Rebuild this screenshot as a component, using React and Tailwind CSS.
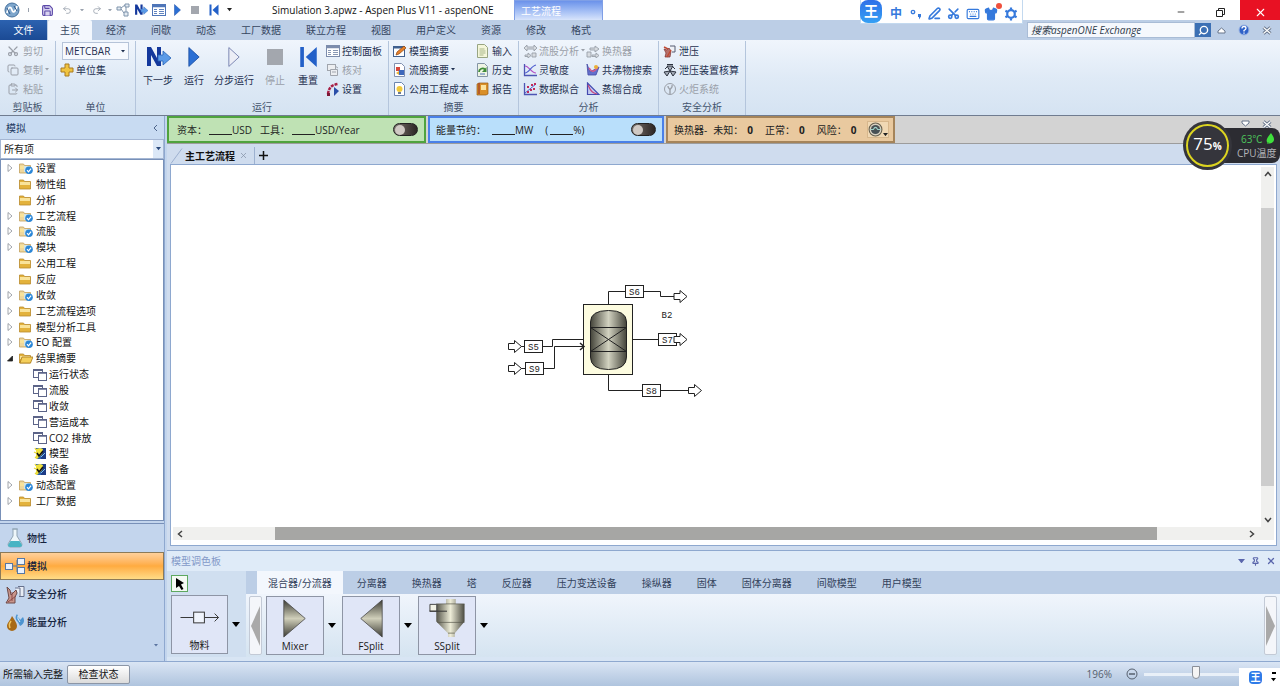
import React, { useState } from "react";
import { Save, Undo2, Redo2, Scissors, Copy, ClipboardPaste, Search, Pin, PenLine, Keyboard, Settings, Shirt, Minus, X } from "lucide-react";

const ribbonTabs = ["经济", "间歇", "动态", "工厂数据", "联立方程", "视图", "用户定义", "资源", "修改", "格式"];

const paletteTabs = ["分离器", "换热器", "塔", "反应器", "压力变送设备", "操纵器", "固体", "固体分离器", "间歇模型", "用户模型"];

const treeItems = [
  { label: "设置", icon: "checked", arrow: true },
  { label: "物性组", icon: "folder" },
  { label: "分析", icon: "folder" },
  { label: "工艺流程", icon: "checked", arrow: true },
  { label: "流股", icon: "checked", arrow: true },
  { label: "模块", icon: "checked", arrow: true },
  { label: "公用工程", icon: "folder" },
  { label: "反应", icon: "folder" },
  { label: "收敛", icon: "checked", arrow: true },
  { label: "工艺流程选项", icon: "folder", arrow: true },
  { label: "模型分析工具", icon: "folder", arrow: true },
  { label: "EO 配置", icon: "checked", arrow: true },
  { label: "结果摘要", icon: "open", arrow: true, expanded: true },
  { label: "运行状态", icon: "form", child: true },
  { label: "流股", icon: "form", child: true },
  { label: "收敛", icon: "form", child: true },
  { label: "营运成本", icon: "form", child: true },
  { label: "CO2 排放", icon: "form", child: true },
  { label: "模型", icon: "result", child: true },
  { label: "设备", icon: "result", child: true },
  { label: "动态配置", icon: "checked", arrow: true },
  { label: "工厂数据", icon: "folder", arrow: true },
];

const Caret = ({ className = "w-[5px]" }) => (
  <svg viewBox="0 0 8 5" className={`shrink-0 ${className}`} fill="currentColor">
    <path d="M0 0h8L4 5z" />
  </svg>
);

const TreeIcon = ({ type }) => {
  if (type === "form")
    return (
      <svg viewBox="0 0 14 13" className="h-[13px] w-[14px]" fill="#fff" stroke="#5c6488">
        <rect x=".5" y="1.500" width="9" height="8" />
        <path d="M.5 2h9" strokeWidth="2" />
        <rect x="5.500" y="4.500" width="8" height="8" />
        <path d="M5.500 5h8" strokeWidth="1.500" />
      </svg>
    );
  if (type === "result")
    return (
      <svg viewBox="0 0 14 13" className="h-[13px] w-[14px]">
        <rect x="3" y="1" width="10" height="11" fill="#2c62b4" />
        <path d="M9 1h4v11H8z" fill="#1d3c86" />
        <path d="M3 2l4-1 3 1-1 5-5 5H3z" fill="#f0e23c" />
        <path d="M2 1l1 2M1 5l2 1M2 11l2-2" stroke="#e6d83a" strokeWidth="1.200" />
        <path d="M4 6l2 3 4-5" fill="none" stroke="#111" strokeWidth="1.600" />
        <path d="M8 10l4-4" stroke="#7fc4e8" />
      </svg>
    );
  return (
    <svg viewBox="0 0 14 12" className="h-3 w-[14px]">
      <path d="M.500 2h4l1 1.500h6V11H.500z" fill={type === "checked" ? "#efd79c" : "#e3b23c"} stroke={type === "checked" ? "#c2a05c" : "#b98a2c"} strokeWidth=".8" />
      <path d="M1 4h10v3H1z" fill="#f9e39a" />
      {type === "open" && <path d="M3 5h11l-2.500 6H1z" fill="#f4cf5c" stroke="#a87a1c" strokeWidth=".8" />}
      {type === "checked" && (
        <g>
          <path d="M5 4h6v6H5z" fill="#d3e4e6" />
          <circle cx="10" cy="8.200" r="3.800" fill="#2b87d8" />
          <path d="M8 8.200l1.500 1.600 2.600-3.200" fill="none" stroke="#fff" strokeWidth="1.200" />
        </g>
      )}
    </svg>
  );
};

const NextIcon = ({ className }) => (
  <svg viewBox="0 0 26 24" className={className}>
    <path d="M2 21V2h4l6 11V2h4v19h-4L6 10v11z" fill="#14389c" />
    <path d="M13 10h5V6l8 7-8 7v-4h-5z" fill="#5b9be8" stroke="#2763b8" strokeWidth=".8" />
  </svg>
);

const PlayIcon = ({ className, fill = "#2b6fd4", stroke = "#1c4fa4" }) => (
  <svg viewBox="0 0 14 24" className={className}>
    <path d="M1 1l12 11L1 23z" fill={fill} stroke={stroke} />
  </svg>
);

const StopIcon = ({ className }) => (
  <svg viewBox="0 0 16 16" className={className}>
    <rect width="16" height="16" fill="#a3a7ae" />
  </svg>
);

const ResetIcon = ({ className }) => (
  <svg viewBox="0 0 20 24" className={className} fill="#2360c8">
    <path d="M1 1h4v22H1zM19 1v22L7 12z" />
  </svg>
);

const TableIcon = ({ className = "h-3 w-3.5", color = "#4f76b8" }) => (
  <svg viewBox="0 0 14 12" className={className} fill="#fff" stroke={color}>
    <rect x=".5" y=".5" width="13" height="11" />
    <path d="M.500 2h13" strokeWidth="2.500" />
    <path d="M2 5.500h3M2 7.500h3M2 9.500h3M7 5.500h5M7 7.500h5M7 9.500h5" strokeWidth=".9" />
  </svg>
);

// 14px drawings used by the small ribbon commands
const drawings = {
  summary: (
    <g>
      <rect x=".5" y="2.500" width="11" height="10" fill="#fff" stroke="#41618f" />
      <path d="M1 3.500h10" stroke="#41618f" strokeWidth="2" />
      <path d="M3 11l1-3 7-6 2 2-7 6z" fill="#e8822a" stroke="#8a4312" strokeWidth=".7" />
    </g>
  ),
  stream: (
    <g>
      <path d="M1.500.5h7l3 3v10h-10z" fill="#fff" stroke="#8090b0" />
      <rect x="3" y="4" width="4" height="4" fill="#d8473a" />
      <rect x="6" y="7" width="5" height="5" fill="#3d68bc" />
      <path d="M3 10l3-2v4z" fill="#eab235" />
    </g>
  ),
  cost: (
    <g>
      <path d="M1.500.5h7l3 3v10h-10z" fill="#fff" stroke="#6a86b0" />
      <circle cx="6.500" cy="7" r="3" fill="#f0c93a" />
      <path d="M5 10h3v2H5z" fill="#6d7b90" />
    </g>
  ),
  input: (
    <g>
      <path d="M1.500.5h7l3 3v10h-10z" fill="#f4f6da" stroke="#98a582" />
      <path d="M3.500 5h5M3.500 7h6M3.500 9h6M3.500 11h4" stroke="#a8b68a" />
    </g>
  ),
  history: (
    <g>
      <path d="M1.500.5h7l3 3v10h-10z" fill="#eef4e4" stroke="#8494a4" />
      <path d="M3 9a3.500 3.500 0 0 1 6-2.500" fill="none" stroke="#3f8b38" strokeWidth="1.800" />
      <path d="M10.500 4v5H6z" fill="#3f8b38" />
      <path d="M4 11h5" stroke="#4e74b8" />
    </g>
  ),
  report: (
    <g>
      <path d="M1 2l2-1h9v11l-2 1H1z" fill="#d98f28" stroke="#9a5c14" strokeWidth=".7" />
      <path d="M3 1v11" stroke="#a7482a" strokeWidth="1.400" />
      <path d="M5 3h5v5H5z" fill="#fbe3a0" />
    </g>
  ),
  flowAnalysis: (
    <g fill="#d7dbe0" stroke="#989fa8" strokeWidth=".9">
      <path d="M1 4l3-3v2h7V1l3 3-3 3V5H4v2zM2 11h3V9l3 2.500L5 14v-1.500H2zM9 9h4v4H9z" />
    </g>
  ),
  exchanger: (
    <g fill="#d7dbe0" stroke="#989fa8" strokeWidth=".9">
      <path d="M1 8h4v5H1zM4 4h5V2l4 3-4 3V6H4zM6 11h4V9l3 2.500-3 2.500v-1.500H6z" />
    </g>
  ),
  sensitivity: (
    <g fill="none">
      <path d="M1.500 1v11.500H14" stroke="#4d55b4" strokeWidth="1.300" />
      <path d="M2 3c4 0 6 7 11 7" stroke="#b04cc4" strokeWidth="1.200" />
      <path d="M2 10c4 0 6-7 11-8" stroke="#5060d0" strokeWidth="1.200" />
    </g>
  ),
  fit: (
    <g fill="none">
      <path d="M1.500 1v11.500H14" stroke="#4d55b4" strokeWidth="1.300" />
      <path d="M2 11L13 2" stroke="#5060d0" />
      <path d="M4 5h2M7 8h2M10 7h2M4 10h2M8 3h2M11 2h2" stroke="#c02c5c" strokeWidth="1.800" />
    </g>
  ),
  azeotrope: (
    <g>
      <path d="M1 1l3 8 9-5-3 8H2z" fill="#6470cc" stroke="#4349a4" strokeWidth=".8" />
      <path d="M3 5c3 5 5 4 9-1" fill="none" stroke="#d55a8c" strokeWidth="1.500" />
      <circle cx="10" cy="4" r="2" fill="#eab03a" />
    </g>
  ),
  distill: (
    <g>
      <path d="M1.500 1v11.500H13z" fill="#c3cbf0" stroke="#4349b0" strokeWidth="1.200" />
      <path d="M2 3c3 7 5 8 9 9" fill="none" stroke="#c5437c" strokeWidth="1.200" />
    </g>
  ),
  relief: (
    <g>
      <path d="M1 5l3 1 2-2 2 3-1 6H2l1-4z" fill="#b8706a" stroke="#7a2e2c" strokeWidth=".7" />
      <path d="M7 2h5v6H9" fill="#eef1f6" stroke="#555b70" />
      <path d="M1 3l4 2M4 13l4-7" stroke="#c04a34" strokeWidth="1.400" />
    </g>
  ),
  valve: (
    <g fill="#a4acb8" stroke="#2e3440">
      <path d="M7 8l-6 1 3 4zM7 8l6 1-3 4zM7 8L4 3h6z" />
      <path d="M4 1.500h6M2 6l3-3M12 6L9 3" />
    </g>
  ),
  flare: (
    <g fill="none" stroke="#9ba0a8">
      <circle cx="7" cy="7" r="5.500" />
      <path d="M5 4c0 3 2 2 2 4v4M9 3c1 3-2 3-2 5" strokeWidth="1.400" />
    </g>
  ),
  reconcile: (
    <g fill="#eceef1" stroke="#a0a5ad">
      <rect x="1.500" y="1.500" width="8" height="6" />
      <path d="M4.500 6.500h7v6h-7zM6 9h4M9 3l3 2" />
    </g>
  ),
  gear: (
    <g>
      <path d="M2 12C3 5 6 3 12 2" fill="none" stroke="#a81f45" strokeWidth="2.500" strokeDasharray="3 1" />
      <path d="M8 5l5 4-5 5z" fill="#2b4ea8" />
      <path d="M1 11h3v3H1z" fill="#7d1736" />
    </g>
  ),
  units: (
    <path d="M5 1h4v4h4v4H9v4H5V9H1V5h4z" fill="#f0c440" stroke="#a97a20" />
  ),
};

const SmallIcon = ({ name }) => (
  <svg viewBox="0 0 14 14" className="h-3.5 w-3.5 shrink-0">
    {drawings[name]}
  </svg>
);

const Command = ({ icon, label, disabled, menu, children }) => (
  <button className={`flex h-[19px] items-center gap-0.5 whitespace-nowrap ${disabled ? "text-[#9a9fa8]" : "text-[#1f3050]"}`}>
    {children || <SmallIcon name={icon} />}
    {label}
    {menu && <Caret className="w-1" />}
  </button>
);

const BigCommand = ({ label, width, disabled, children }) => (
  <button className={`flex flex-col items-center gap-[3px] pt-1 ${width} ${disabled ? "text-[#9a9fa8]" : "text-[#1f3050]"}`}>
    <span className="flex h-6 items-center">{children}</span>
    <span className="whitespace-nowrap">{label}</span>
  </button>
);

const Group = ({ title, width, children }) => (
  <div className={`flex shrink-0 flex-col border-r border-[#b4c5dc] ${width}`}>
    <div className="flex h-[57px]">{children}</div>
    <div className="flex h-[17px] items-center justify-center text-[#44546e]">{title}</div>
  </div>
);

const CloseMark = () => (
  <svg viewBox="0 0 10 9" className="h-[9px] w-2.5" fill="none">
    <path d="M1.500 1.500l7 6M8.500 1.500l-7 6" stroke="#66748a" strokeWidth="3" />
    <path d="M1.500 1.500l7 6M8.500 1.500l-7 6" stroke="#fff" strokeWidth="1.200" />
  </svg>
);

const TitleBar = () => (
  <header className="relative flex h-5 items-center bg-white">
    <div className="flex w-[254px] shrink-0 items-center text-[#9aa2ae]">
      <svg viewBox="0 0 16 16" className="ml-1 h-4 w-4">
        <circle cx="8" cy="8" r="7" fill="#7ea6cc" stroke="#45719e" />
        <path d="M3 11c2-8 4-6 5-3s3 3 5-4" fill="none" stroke="#fff" strokeWidth="1.800" />
        <path d="M3 6l3 6M10 4l3 5" stroke="#2c5484" />
      </svg>
      <span className="ml-2 h-1 w-px bg-[#9aa2ae]" />
      <button aria-label="保存" className="ml-3">
        <Save size={13} fill="#d9d3f0" className="text-[#5b48a8]" />
      </button>
      <button aria-label="撤消" className="ml-2"><Undo2 size={10} /></button>
      <Caret className="ml-2 w-1" />
      <button aria-label="恢复" className="ml-2"><Redo2 size={10} /></button>
      <Caret className="ml-1.5 w-1" />
      <button aria-label="流程" className="ml-1">
        <svg viewBox="0 0 14 14" className="h-3.5 w-3.5" fill="#e4ebf2" stroke="#7f94ac">
          <path d="M1 4h4v3H1zM9 1h4v3H9zM8 9h4v4H8zM5 5l4-3M5 6l3 4M10 4v5" />
        </svg>
      </button>
      <button aria-label="下一步" className="ml-1"><NextIcon className="h-3.5 w-3.5" /></button>
      <button aria-label="控制面板" className="ml-1"><TableIcon /></button>
      <button aria-label="运行" className="ml-2"><PlayIcon className="h-3 w-[7px]" /></button>
      <button aria-label="停止" className="ml-2.5"><StopIcon className="h-2 w-2" /></button>
      <button aria-label="重置" className="ml-2.5"><ResetIcon className="h-3 w-2.5" /></button>
      <button aria-label="自定义" className="ml-2 text-[#222]"><Caret /></button>
    </div>
    <h1 className="ml-[18px] text-[#111]">Simulation 3.apwz - Aspen Plus V11 - aspenONE</h1>
    <div className="absolute top-0 left-[514px] h-5 w-[89px] border-x border-t border-[#7f9fe6] bg-linear-to-b from-[#6b92ea] to-[#d8e4fb] px-1.5 pt-0.5 text-white">
      工艺流程
    </div>
    <div className="ml-auto flex h-full text-[#222]">
      <button aria-label="最小化" className="flex w-[38px] items-center justify-center pt-1"><Minus size={10} /></button>
      <button aria-label="还原" className="flex w-10 items-center justify-center pt-1">
        <svg viewBox="0 0 9 9" className="h-[9px] w-[9px]" fill="none" stroke="currentColor">
          <path d="M.5 2.500h6v6h-6zM2.500 2V.5h6v6H7" />
        </svg>
      </button>
      <button aria-label="关闭" className="flex w-10 items-center justify-center bg-[#e81123] pt-1 text-white"><X size={13} strokeWidth={2} /></button>
    </div>
  </header>
);

const ImeBar = () => (
  <div className="absolute top-0 left-[860px] z-20 flex h-6 items-center border border-t-0 border-[#c3d9ef] bg-white pr-1 text-[#3579dc]">
    <span className="-mt-px -ml-px flex h-[23px] w-[22px] items-center justify-center rounded-lg bg-linear-to-b from-[#2f6fe8] to-[#36a0f4] text-[14px] leading-none font-bold text-white">王</span>
    <span className="ml-2 pt-1 text-[12px] leading-none font-bold">中</span>
    <svg viewBox="0 0 12 12" className="mt-1 ml-2 h-3 w-3">
      <circle cx="3" cy="4" r="1.700" fill="none" stroke="currentColor" strokeWidth="1.300" />
      <path d="M8 6h3v2.500L9 11.500V9H8z" fill="currentColor" />
    </svg>
    <PenLine size={13} strokeWidth={3} className="mt-1 ml-1.5" />
    <Scissors size={13} strokeWidth={3} className="mt-1 ml-1.5 -rotate-90" />
    <Keyboard size={14} strokeWidth={2} className="mt-1 ml-1.5" />
    <span className="relative mt-1 ml-1">
      <Shirt size={14} fill="currentColor" />
      <i className="absolute -top-1 -right-1 h-1.5 w-1.5 rounded-full bg-[#f0503c]" />
    </span>
    <svg viewBox="0 0 14 14" className="mt-1 ml-1.5 h-3.5 w-3.5" fill="none" stroke="currentColor">
      <circle cx="7" cy="7" r="3.800" strokeWidth="2.200" />
      <path d="M7 .5v2M7 11.500v2M1.400 3.700l1.800 1M10.800 9.300l1.800 1M1.400 10.300l1.800-1M10.800 4.700l1.800-1" strokeWidth="2.200" />
    </svg>
  </div>
);

const TabRow = () => (
  <nav className="flex h-5 items-stretch gap-px bg-[#bccee6] text-[#35455f]">
    <button className="w-[47px] bg-linear-to-b from-[#2c62b0] to-[#1b4a94] text-white">文件</button>
    <button className="mr-px w-11 rounded-t-xs bg-[#f3f7fd]">主页</button>
    {ribbonTabs.map((tab) => (
      <button key={tab} className="px-3 whitespace-nowrap">{tab}</button>
    ))}
    <div className="ml-auto flex items-center">
      <input
        aria-label="搜索"
        placeholder="搜索aspenONE Exchange"
        className="h-4 w-[168px] border border-[#a9bcd6] bg-[#f5f8fd] px-[3px] text-[10px] italic placeholder:text-[#2f3b4c]"
      />
      <button aria-label="搜索" className="flex h-3.5 w-4 items-center justify-center bg-[#3c70b4] text-white">
        <Search size={11} strokeWidth={3} className="-scale-x-100" />
      </button>
      <button aria-label="折叠功能区" className="ml-1.5">
        <svg viewBox="0 0 9 7" className="h-[7px] w-[9px]" fill="#fff" stroke="#66748a"><path d="M1 4l3.500-3L8 4v2H1z" /></svg>
      </button>
      <button aria-label="帮助" className="ml-3">
        <svg viewBox="0 0 12 12" className="h-3 w-3">
          <circle cx="6" cy="6" r="5" fill="#2f62c8" stroke="#9bb5e4" />
          <path d="M4 4.500q0-2 2-2t2 1.800q0 1.200-2 2.200v1M6 8.600v1.200" fill="none" stroke="#fff" strokeWidth="1.300" />
        </svg>
      </button>
      <button aria-label="关闭" className="mr-2 ml-3"><CloseMark /></button>
    </div>
  </nav>
);

const Ribbon = () => (
  <section className="flex h-[75px] overflow-hidden bg-linear-to-b from-[#f0f5fc] via-[#dfeaf6] to-[#d5e3f2] pt-px">
    <Group title="剪贴板" width="w-14">
      <div className="flex flex-col pl-[7px]">
        <Command label="剪切" disabled><Scissors size={12} strokeWidth={2.500} className="mr-0.5 -rotate-90" /></Command>
        <Command label="复制" disabled menu><Copy size={12} className="mr-0.5" /></Command>
        <Command label="粘贴" disabled><ClipboardPaste size={12} className="mr-0.5" /></Command>
      </div>
    </Group>
    <Group title="单位" width="w-20">
      <div className="flex flex-col pl-1">
        <div className="relative mt-px ml-0.5 h-[18px] w-[67px] text-[#1f3050]">
          <select aria-label="单位集" className="h-full w-full appearance-none border border-[#b5c3d8] bg-[#f6f9fe] pl-0.5 text-[10px]">
            <option>METCBAR</option>
          </select>
          <Caret className="pointer-events-none absolute top-2 right-1 w-1" />
        </div>
        <Command icon="units" label="单位集" />
      </div>
    </Group>
    <Group title="运行" width="w-[253px]">
      <div className="flex pl-0.5">
        <BigCommand label="下一步" width="w-10"><NextIcon className="h-6 w-[26px]" /></BigCommand>
        <BigCommand label="运行" width="w-8"><PlayIcon className="h-[22px] w-3" /></BigCommand>
        <BigCommand label="分步运行" width="w-12"><PlayIcon className="h-[22px] w-3" fill="#eceef6" stroke="#6a76a8" /></BigCommand>
        <BigCommand label="停止" width="w-[34px]" disabled><StopIcon className="h-4 w-4" /></BigCommand>
        <BigCommand label="重置" width="w-8"><ResetIcon className="h-[22px] w-[19px]" /></BigCommand>
      </div>
      <div className="flex flex-col pl-0.5">
        <Command label="控制面板"><TableIcon color="#7c8cac" /></Command>
        <Command icon="reconcile" label="核对" disabled />
        <Command icon="gear" label="设置" />
      </div>
    </Group>
    <Group title="摘要" width="w-[130px]">
      <div className="flex w-[87px] flex-col pl-1">
        <Command icon="summary" label="模型摘要" />
        <Command icon="stream" label="流股摘要" menu />
        <Command icon="cost" label="公用工程成本" />
      </div>
      <div className="flex flex-col">
        <Command icon="input" label="输入" />
        <Command icon="history" label="历史" />
        <Command icon="report" label="报告" />
      </div>
    </Group>
    <Group title="分析" width="w-[140px]">
      <div className="flex w-[67px] flex-col pl-1">
        <Command icon="flowAnalysis" label="流股分析" disabled menu />
        <Command icon="sensitivity" label="灵敏度" />
        <Command icon="fit" label="数据拟合" />
      </div>
      <div className="flex flex-col">
        <Command icon="exchanger" label="换热器" disabled />
        <Command icon="azeotrope" label="共沸物搜索" />
        <Command icon="distill" label="蒸馏合成" />
      </div>
    </Group>
    <Group title="安全分析" width="w-[87px]">
      <div className="flex flex-col pl-1">
        <Command icon="relief" label="泄压" />
        <Command icon="valve" label="泄压装置核算" />
        <Command icon="flare" label="火炬系统" disabled />
      </div>
    </Group>
  </section>
);

const NavIcon = ({ name }) => (
  <svg viewBox="0 0 20 20" className="h-5 w-5">
    {name === "flask" && (
      <g>
        <path d="M7 1h6M8 1v7L3 16q0 3 2 3h10q2 0 2-3l-5-8V1z" fill="#eef6fa" stroke="#90a4b4" />
        <path d="M5.500 13h9l2.500 4q0 2-2 2H5q-2 0-2-2z" fill="#48b4c4" />
      </g>
    )}
    {name === "flow" && (
      <g fill="#eaf1fb" stroke="#5678a4">
        <path d="M8 10h4M12 4v12M12 4h1M12 16h1" fill="none" />
        <rect x="0.500" y="7.500" width="7" height="6" />
        <rect x="12.500" y="2.500" width="7" height="6" />
        <rect x="12.500" y="11.500" width="7" height="6" />
      </g>
    )}
    {name === "safety" && (
      <g>
        <path d="M13 2.500h6v10h-5M10 4h5v8" fill="#e8edf5" stroke="#66708c" />
        <path d="M2 3l3 3 1 5 5-5 1 3-2 4v6H1l3-5z" fill="#c9968c" stroke="#6e4a48" />
        <path d="M3 18l8-6M7 8v9" stroke="#8e4a48" />
      </g>
    )}
    {name === "energy" && (
      <g>
        <path d="M7 4c4 6 5 8 5 10a4.500 4.500 0 0 1-10 0c0-3 3-5 5-10z" fill="#a86a16" />
        <path d="M6 9c-2 3-2 4-1 7" fill="none" stroke="#f0c45c" strokeWidth="1.500" />
        <path d="M12 2c-2 3-2 5 1 8l2 4c4-2 5-5 3-9l-3 3z" fill="#4d94d0" />
        <path d="M13 4q-1 3 2 6" fill="none" stroke="#e0f2fc" />
      </g>
    )}
  </svg>
);

const navItems = [
  { label: "物性", icon: "flask" },
  { label: "模拟", icon: "flow" },
  { label: "安全分析", icon: "safety" },
  { label: "能量分析", icon: "energy" },
];

const Sidebar = () => {
  const [active, setActive] = useState("模拟");

  return (
    <aside className="flex w-[165px] shrink-0 flex-col border-r border-[#8ea8cf] bg-[#c3d5ed]">
      <div className="flex h-[23px] items-center justify-between bg-[#c8dbf2] px-1.5 text-[#1e3a63]">
        模拟
        <button aria-label="折叠">
          <svg viewBox="0 0 5 8" className="h-2 w-[5px]" fill="none" stroke="#4d648a"><path d="M4 1L1 4l3 3" /></svg>
        </button>
      </div>
      <div className="relative h-5">
        <select aria-label="筛选" className="h-full w-full appearance-none border border-[#a5b7d4] bg-white px-[3px] text-[#222]">
          <option>所有项</option>
        </select>
        <span className="pointer-events-none absolute top-px right-px flex h-[18px] w-2.5 items-center justify-center bg-[#dce8f7] text-[#2c4a7c]"><Caret /></span>
      </div>
      <div className="flex-1 border border-[#7890b8] bg-white pr-1">
        <ul className="grid h-[349px] auto-rows-fr text-[#111]">
          {treeItems.map((item, idx) => (
            <li key={idx} className={`flex items-center ${item.child ? "gap-0.5 pl-8" : "gap-[3px] pl-1"}`}>
              {!item.child && (
                <span className="flex w-[11px]">
                  {item.arrow && (
                    <svg viewBox="0 0 6 8" className="ml-0.5 h-2 w-1.5" fill={item.expanded ? "#222" : "#fff"} stroke={item.expanded ? "#222" : "#8a8f98"} strokeWidth=".8">
                      {item.expanded ? <path d="M5.500 2v5h-5z" /> : <path d="M1 .500L5 4 1 7.500z" />}
                    </svg>
                  )}
                </span>
              )}
              <TreeIcon type={item.icon} />
              <span>{item.label}</span>
            </li>
          ))}
        </ul>
      </div>
      <div className="mt-0.5 flex h-[138px] flex-col border-t border-[#7890b8]">
        {navItems.map((item) => (
          <button
            key={item.label}
            onClick={() => setActive(item.label)}
            className={`flex h-7 items-center gap-0.5 border px-1 font-medium text-[#14233d] ${
              active === item.label
                ? "border-[#8c7a58] bg-linear-to-b from-[#ffd09a] via-[#ffab3f] to-[#ffdc86]"
                : "border-transparent"
            }`}
          >
            <NavIcon name={item.icon} />
            {item.label}
          </button>
        ))}
        <button aria-label="更多" className="mt-2 mr-1.5 self-end text-[#5a74a0]"><Caret className="w-1" /></button>
      </div>
    </aside>
  );
};

const Toggle = ({ label }) => (
  <label className="ml-auto flex h-[13px] w-[25px] cursor-pointer items-center rounded-full border border-[#222] bg-linear-to-r from-[#7a736e] to-[#2c2624] p-px">
    <input type="checkbox" aria-label={label} className="peer sr-only" />
    <span className="h-2.5 w-2.5 rounded-full bg-[#cfc9c4] peer-checked:ml-auto" />
  </label>
);

const Blank = () => <span className="ml-0.5 h-[11px] w-[23px] shrink-0 border-b border-[#222]" />;

const EconomicsBar = () => (
  <div className="flex h-[28px] shrink-0 border-b border-[#9c9c9c] bg-[#d3d3d3] whitespace-nowrap text-[#222]">
    <div className="flex w-[259px] shrink-0 items-center border-2 border-[#4fa33e] bg-[#bfe2b4] pr-1.5 pl-2">
      <span>资本：</span>
      <Blank />
      <span>USD</span>
      <span className="ml-2">工具：</span>
      <Blank />
      <span>USD/Year</span>
      <Toggle label="经济" />
    </div>
    <div className="ml-0.5 flex w-[236px] shrink-0 items-center border-2 border-[#4a80e8] bg-[#b9dffb] px-1.5">
      <span className="mr-1">能量节约：</span>
      <Blank />
      <span>MW</span>
      <span className="ml-3">(</span>
      <Blank />
      <span>%)</span>
      <Toggle label="能量" />
    </div>
    <div className="ml-0.5 flex w-[229px] shrink-0 items-center border-2 border-[#a5845a] bg-[#e9c99f] pr-1 pl-1.5">
      <span>换热器-</span>
      <span className="ml-1.5">未知：</span>
      <b className="ml-1">0</b>
      <span className="ml-3">正常：</span>
      <b className="ml-1">0</b>
      <span className="ml-3">风险：</span>
      <b className="ml-1">0</b>
      <button aria-label="换热器" className="ml-auto flex h-[17px] w-[22px] items-end border border-[#d7b78c] bg-[#f0d8b4]">
        <svg viewBox="0 0 14 14" className="h-[15px] w-[15px] shrink-0">
          <circle cx="7" cy="7" r="6" fill="#d8d0c0" stroke="#66604f" />
          <circle cx="7" cy="7" r="4.300" fill="#485054" />
          <path d="M2 7h3q2-4 4 0h3" fill="none" stroke="#9ed0c8" />
        </svg>
        <Caret className="mb-px w-[5px]" />
      </button>
    </div>
    <div className="ml-auto flex items-start gap-3 pt-1 pr-2">
      <button aria-label="收起">
        <svg viewBox="0 0 9 7" className="h-[7px] w-[9px]" fill="#fff" stroke="#66748a"><path d="M1 1h7v2L4.500 6 1 3z" /></svg>
      </button>
      <button aria-label="关闭"><CloseMark /></button>
    </div>
  </div>
);

const StreamTag = ({ x, y, name }) => (
  <g>
    <rect x={x} y={y} width="18" height="12" fill="#fff" />
    <text x={x + 9} y={y + 9} textAnchor="middle" fill="#222" stroke="none" className="font-['Liberation_Mono'] text-[9px]">{name}</text>
  </g>
);

const StreamArrow = ({ x, y }) => (
  <path d={`M${x} ${y - 3}h6v-3l7 6-7 6v-3h-6z`} fill="#fff" />
);

const Flowsheet = () => (
  <svg viewBox="0 0 210 120" className="absolute top-[113px] left-[327px] h-[120px] w-[210px]" fill="none" stroke="#222">
    <defs>
      <linearGradient id="vessel">
        <stop offset="0" stopColor="#44443a" />
        <stop offset=".5" stopColor="#d2d2c0" />
        <stop offset="1" stopColor="#44443a" />
      </linearGradient>
    </defs>
    <path d="M108.500 24V11.500h17M143 11.500h17.500v5H174M132 59.500h26M108.500 94v16.500h34M160 110.500h30M43 66.500h9.500v-7H83M43 88.500h11.500v-22H83M21 66.500h5M21 88.500h5" />
    <rect x="83.500" y="24.500" width="49" height="70" fill="#fdfce0" />
    <path d="M80 63l4 3.500-4 3.500" strokeWidth="1.500" />
    <path d="M90.500 42q0-11.500 18-11.500t18 11.500v35q0 12.500-18 12.500t-18-12.500z" fill="url(#vessel)" />
    <path d="M90.500 47.500h36M90.500 71.500h36M90.500 47.500l36 24M126.500 47.500l-36 24" />
    <StreamTag x={125.500} y={5.500} name="S6" />
    <StreamTag x={158.500} y={53.500} name="S7" />
    <StreamTag x={142.500} y={104.500} name="S8" />
    <StreamTag x={24.500} y={60.500} name="S5" />
    <StreamTag x={25.500} y={82.500} name="S9" />
    <StreamArrow x={174} y={16.500} />
    <StreamArrow x={174} y={59.500} />
    <StreamArrow x={188.500} y={110.500} />
    <StreamArrow x={8.500} y={66.500} />
    <StreamArrow x={8.500} y={88.500} />
    <text x="167" y="38" textAnchor="middle" fill="#222" stroke="none" className="font-['Liberation_Mono'] text-[9px]">B2</text>
  </svg>
);

const Chevron = ({ className }) => (
  <svg viewBox="0 0 8 8" className={`h-2 w-2 ${className}`} fill="none" stroke="#444" strokeWidth="1.500">
    <path d="M1 6l3-3.500L7 6" />
  </svg>
);

const Workspace = () => (
  <div className="flex min-h-0 flex-1 flex-col bg-[#cfdcee] px-[3px] pb-1">
    <div className="flex h-5 shrink-0 items-end text-[#111]">
      <div className="relative flex h-[17px] items-center gap-1 border-r border-[#9db1d0] pr-1.5 pl-[15px]">
        <svg viewBox="0 0 14 17" className="absolute bottom-0 left-0 h-[17px] w-3.5" fill="none" stroke="#9db1d0">
          <path d="M1 16.500L12 1.500" />
        </svg>
        <span className="font-bold">主工艺流程</span>
        <button aria-label="关闭标签"><X size={9} className="text-[#8793a8]" /></button>
      </div>
      <button aria-label="新建标签" className="ml-1 flex h-[17px] items-center">
        <svg viewBox="0 0 9 9" className="h-[9px] w-[9px]" stroke="#111" strokeWidth="1.500"><path d="M4.500 0v9M0 4.500h9" /></svg>
      </button>
    </div>
    <div className="flex flex-1 flex-col border border-[#8ea8cf] bg-white px-0.5 pt-0.5 pb-[5px]">
      <div className="flex flex-1">
        <div className="relative flex-1 overflow-hidden">
          <Flowsheet />
        </div>
        <div className="flex w-[13px] flex-col bg-[#f0f0ee]">
          <button aria-label="向上" className="flex h-3.5 items-center justify-center"><Chevron /></button>
          <div className="grow-[27]" />
          <div className="grow-[277] bg-[#cdcdcd]" />
          <div className="grow-[27]" />
          <button aria-label="向下" className="flex h-3.5 items-center justify-center"><Chevron className="rotate-180" /></button>
        </div>
      </div>
      <div className="flex h-[13px] bg-[#f0f0ee] pr-[15px]">
        <button aria-label="向左" className="flex w-3.5 items-center justify-center"><Chevron className="-rotate-90" /></button>
        <div className="grow-[88]" />
        <div className="grow-[882] bg-[#a6a6a4]" />
        <div className="grow-[88]" />
        <button aria-label="向右" className="flex w-3.5 items-center justify-center"><Chevron className="rotate-90" /></button>
      </div>
    </div>
  </div>
);

const ModelButton = ({ label, children }) => (
  <div className="flex items-center">
    <button className="flex h-[59px] w-[58px] flex-col items-center justify-between border border-[#8e95a5] bg-[#e0e6f7] pt-0.5 text-[#1a1a1a]">
      <svg viewBox="0 0 40 40" className="h-10 w-10">{children}</svg>
      {label}
    </button>
    <button aria-label={`${label} 选项`} className="flex w-[18px] pl-1 text-black"><Caret className="w-2" /></button>
  </div>
);

const Palette = () => (
  <section className="flex h-[111px] shrink-0 flex-col border-t border-[#8ea8cf] bg-[#d8e5f4]">
    <div className="flex h-5 shrink-0 items-center justify-between bg-[#dfebf8] px-1 text-[#8399c8]">
      模型调色板
      <div className="flex items-center gap-1.5 text-[#5a66ac]">
        <button aria-label="菜单"><Caret className="w-[7px]" /></button>
        <button aria-label="固定"><Pin size={9} strokeWidth={3} /></button>
        <button aria-label="关闭"><X size={10} strokeWidth={3} /></button>
      </div>
    </div>
    <div className="flex flex-1 pb-1">
      <div className="flex w-[79px] shrink-0 flex-col gap-[3px] bg-[#d0dff0] pt-1 pl-1">
        <button aria-label="选择" className="flex h-[17px] w-[17px] items-center justify-center border border-[#5ea860] bg-[#f5faf4]">
          <svg viewBox="0 0 10 12" className="h-3 w-2.5"><path d="M1 0l8 5-3 1.500L8.500 11l-2 1L4 8 1 10z" /></svg>
        </button>
        <ModelButton label="物料">
          <path d="M0 20h13M25 20h14M35 16l4 4-4 4" fill="none" stroke="#333" />
          <rect x="13.500" y="14.500" width="11" height="11" fill="#f0f4fc" stroke="#333" />
        </ModelButton>
      </div>
      <div className="flex flex-1 flex-col">
        <div className="flex h-[23px] items-stretch gap-px bg-[#bccee6] pl-[11px] text-[#33425c]">
          <button className="mr-px bg-[#f3f7fd] px-[11px] whitespace-nowrap">混合器/分流器</button>
          {paletteTabs.map((tab) => (
            <button key={tab} className="px-3 whitespace-nowrap">{tab}</button>
          ))}
        </div>
        <div className="flex flex-1 items-center bg-linear-to-b from-[#f0f5fc] to-[#d5e4f1] px-[3px]">
          <button aria-label="上一页" className="flex h-[59px] w-[13px] items-center justify-center rounded-xs border border-[#c3cad6] bg-[#f4f6fa]">
            <svg viewBox="0 0 9 40" className="h-10 w-[9px]" fill="#a9a9a9"><path d="M9 0v40L0 20z" /></svg>
          </button>
          <div className="ml-1 flex">
            <svg className="absolute h-0 w-0">
              <defs>
                <linearGradient id="metal" x1="0" y1="0" x2="0" y2="1">
                  <stop offset="0" stopColor="#3c3c34" />
                  <stop offset=".5" stopColor="#d0cfba" />
                  <stop offset="1" stopColor="#3c3c34" />
                </linearGradient>
                <linearGradient id="drum">
                  <stop offset="0" stopColor="#55554a" />
                  <stop offset=".5" stopColor="#eeedd8" />
                  <stop offset="1" stopColor="#4a4a40" />
                </linearGradient>
              </defs>
            </svg>
            <ModelButton label="Mixer">
              <path d="M8.500 1l22 19-22 19z" fill="url(#metal)" stroke="#444" strokeWidth=".8" />
            </ModelButton>
            <ModelButton label="FSplit">
              <path d="M31.500 1v38l-22-19z" fill="url(#metal)" stroke="#444" strokeWidth=".8" />
            </ModelButton>
            <ModelButton label="SSplit">
              <path d="M19 0h10v5h9v18L28 35v4h-7v-4L9 23V5h10z" fill="url(#drum)" />
              <path d="M19 5h10M9 5h10M29 5h9M10 24h28M21 35h7" stroke="#55554a" strokeWidth=".7" />
              <path d="M2.500 5.500h7v7h-7z" fill="#f2f2e6" stroke="#444" />
              <path d="M2 12.500h18" stroke="#333" />
            </ModelButton>
          </div>
          <button aria-label="下一页" className="ml-auto flex h-[59px] w-[13px] items-center justify-center rounded-xs border border-[#c3cad6] bg-[#f4f6fa]">
            <svg viewBox="0 0 9 40" className="h-10 w-[9px]" fill="#a9a9a9"><path d="M0 0v40l9-20z" /></svg>
          </button>
        </div>
      </div>
    </div>
  </section>
);

const StatusBar = () => {
  const [zoom, setZoom] = useState(50);

  return (
    <footer className="relative flex h-[25px] shrink-0 items-center border-t border-[#8ea8cf] bg-linear-to-b from-[#dae5f4] to-[#afc4de] pl-[3px] text-[#111]">
      <span>所需输入完整</span>
      <button className="ml-1 h-[19px] w-[63px] rounded-xs border border-[#8c96a6] bg-linear-to-b from-white to-[#dcdcdc]">检查状态</button>
      <span className="ml-auto text-[#56606e]">196%</span>
      <button aria-label="缩小" className="ml-3.5 text-[#56606e]">
        <svg viewBox="0 0 12 12" className="h-3 w-3" fill="none" stroke="currentColor"><path d="M3 6h6" strokeWidth="1.500" /><circle cx="6" cy="6" r="5" /></svg>
      </button>
      <input
        type="range"
        aria-label="缩放"
        value={zoom}
        onChange={(e) => setZoom(e.target.value)}
        className="mr-8 ml-1.5 h-4 w-[104px] appearance-none bg-transparent [&::-webkit-slider-runnable-track]:h-[3px] [&::-webkit-slider-runnable-track]:bg-[#e9f0f8] [&::-webkit-slider-thumb]:-mt-[7px] [&::-webkit-slider-thumb]:h-[13px] [&::-webkit-slider-thumb]:w-2 [&::-webkit-slider-thumb]:appearance-none [&::-webkit-slider-thumb]:rounded-b-sm [&::-webkit-slider-thumb]:border [&::-webkit-slider-thumb]:border-[#8a8f98] [&::-webkit-slider-thumb]:bg-[#f4f4f4]"
      />
      <div className="absolute right-0 bottom-0 flex h-[18px] w-[41px] items-center justify-between bg-white pr-1 pl-2.5">
        <span className="flex h-[13px] w-[13px] items-center justify-center rounded-sm bg-[#2f7be8] text-[10px] leading-none font-bold text-white">王</span>
        <span className="flex flex-col items-center gap-1 text-black">
          <i className="h-0.5 w-1 bg-black" />
          <Caret className="w-[5px]" />
        </span>
      </div>
    </footer>
  );
};

const CpuWidget = () => (
  <div className="absolute top-[121px] right-0 z-20 flex items-center">
    <div className="z-10 flex h-[49px] w-[49px] items-center justify-center rounded-full bg-[#35353c]">
      <div className="flex h-[43px] w-[43px] items-baseline justify-center rounded-full border-2 border-[#dcd420] pt-2 text-white">
        <span className="text-[17px] leading-5">75</span>
        <span className="text-[10px] font-bold">%</span>
      </div>
    </div>
    <div className="-ml-3 flex h-[35px] w-[60px] flex-col justify-center rounded-r-lg bg-[#2c2c32] pl-[17px] whitespace-nowrap">
      <span className="flex items-center gap-1 pl-1 leading-[14px] text-[#4cc45c]">
        63℃
        <svg viewBox="0 0 8 11" className="h-[11px] w-2" fill="#3fe03c"><path d="M5 0c3 4 4 7 2 9s-5 2-6 0 0-4 4-9zM3 9l-2 2h1z" /></svg>
      </span>
      <span className="leading-[14px] text-[#b4b4b8]">CPU温度</span>
    </div>
  </div>
);

const App = () => {
  return (
    <div className="relative flex min-h-screen flex-col overflow-hidden bg-[#c3d5ed] font-['Open_Sans','Noto_Sans_CJK_SC',sans-serif] text-[10px] leading-4">
      <TitleBar />
      <TabRow />
      <Ribbon />
      <main className="flex flex-1 border-t border-[#707c90]">
        <Sidebar />
        <div className="ml-0.5 flex min-w-0 flex-1 flex-col">
          <EconomicsBar />
          <Workspace />
          <Palette />
        </div>
      </main>
      <StatusBar />
      <ImeBar />
      <CpuWidget />
    </div>
  );
};

export default App;
